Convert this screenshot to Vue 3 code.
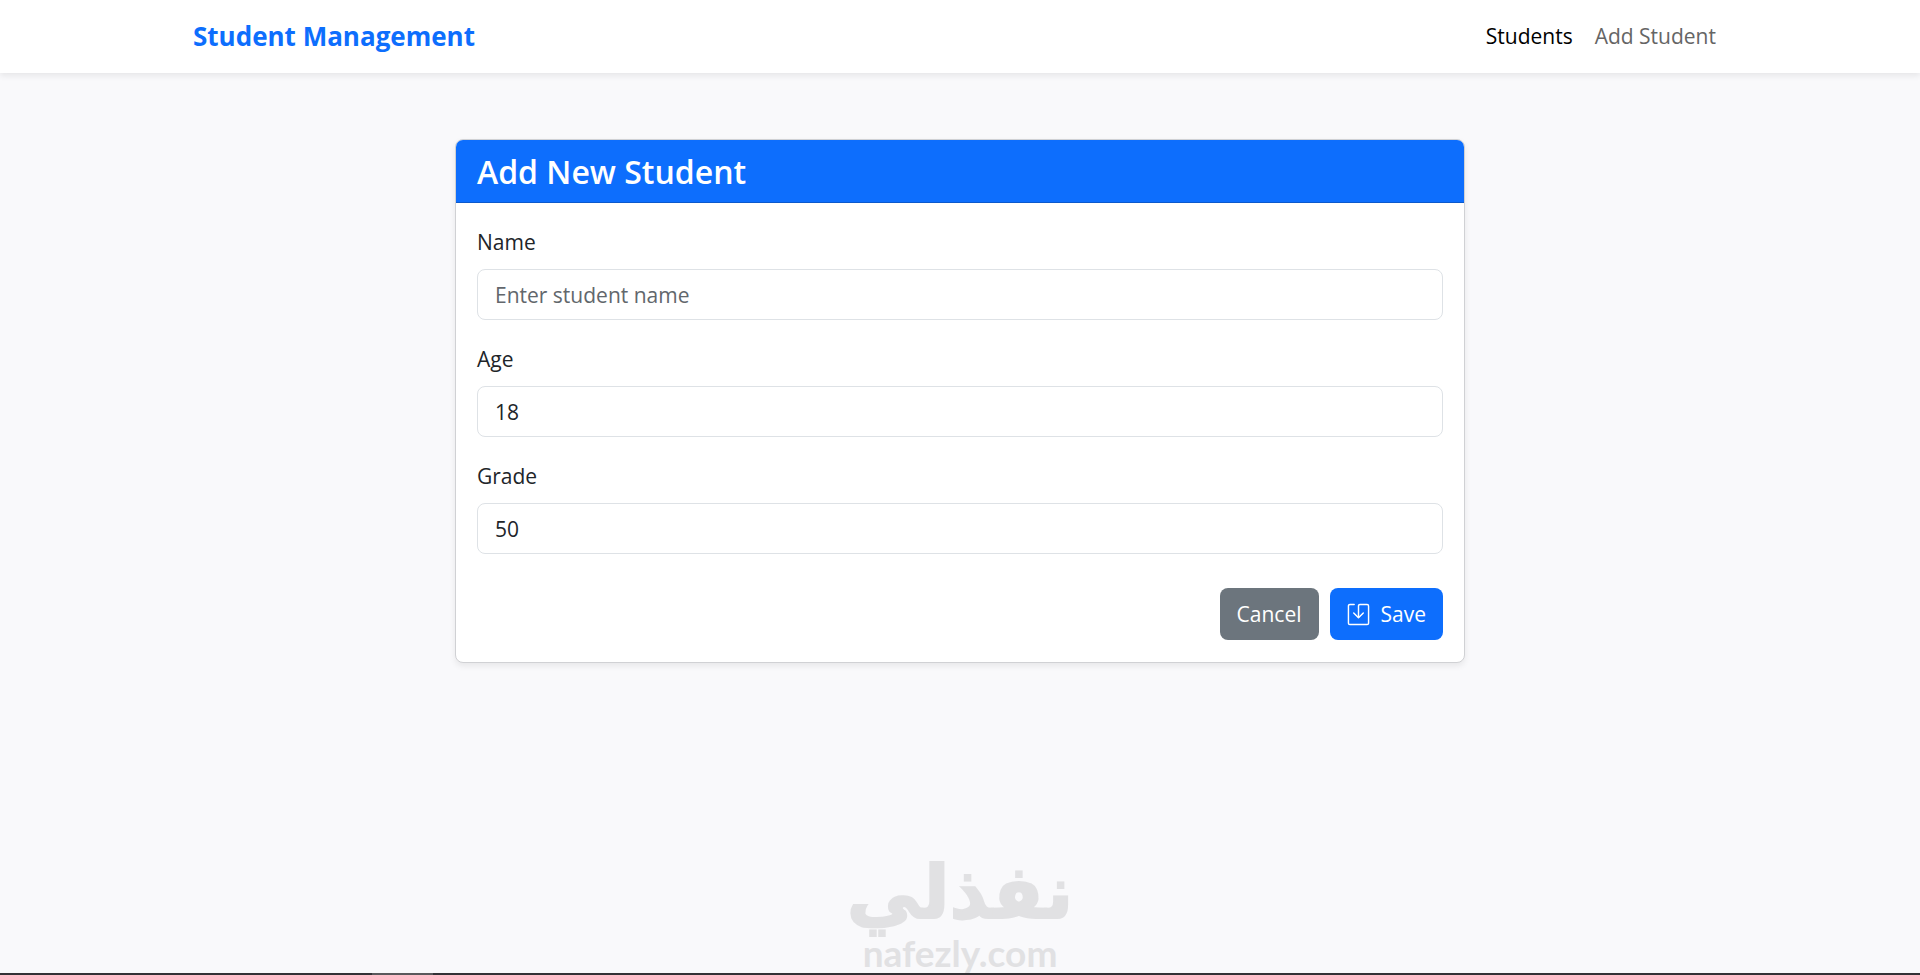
<script setup>
import { ref } from 'vue'

const name = ref('')
const age = ref(18)
const grade = ref(50)
</script>

<template>
  <div class="page">
    <header class="navbar">
      <div class="container">
        <a class="brand" href="#">Student Management</a>
        <nav class="links">
          <a class="link active" href="#students">Students</a>
          <a class="link" href="#add">Add Student</a>
        </nav>
      </div>
    </header>

    <main class="main">
      <section class="card">
        <h1 class="card-title">Add New Student</h1>
        <form class="card-body" @submit.prevent>
          <div class="field">
            <label for="name">Name</label>
            <input id="name" v-model="name" type="text" placeholder="Enter student name" />
          </div>
          <div class="field">
            <label for="age">Age</label>
            <input id="age" v-model="age" type="number" />
          </div>
          <div class="field">
            <label for="grade">Grade</label>
            <input id="grade" v-model="grade" type="number" />
          </div>
          <div class="actions">
            <button class="btn cancel" type="button">Cancel</button>
            <button class="btn save" type="submit">
              <svg class="icon" viewBox="0 0 24 24" aria-hidden="true">
                <path d="M7.500 1.500H3A1.500 1.500 0 0 0 1.500 3v18A1.500 1.500 0 0 0 3 22.500h18a1.500 1.500 0 0 0 1.500-1.500V3A1.500 1.500 0 0 0 21 1.500h-7.500A1.500 1.500 0 0 0 12 3v12" />
                <path d="M7 10.500l5 5 5-5" />
              </svg>
              <span>Save</span>
            </button>
          </div>
        </form>
      </section>
    </main>

    <div class="watermark">
      <span class="mark-ar" lang="ar" dir="rtl">نفذلي</span>
      <span class="mark-en">nafezly.com</span>
    </div>

    <footer class="edge"><span class="edge-thumb"></span></footer>
  </div>
</template>

<style>
body {
  margin: 0;
  background: #f9f9fb;
}
</style>

<style scoped>
.page,
.page * {
  box-sizing: border-box;
}

.page {
  position: relative;
  display: flex;
  flex-direction: column;
  min-height: 100vh;
  overflow: hidden;
  color: #212529;
  font-family: "Segoe UI", "Open Sans", "Noto Sans", sans-serif;
  font-size: 21px;
  line-height: 33px;
}

.navbar {
  padding: 11px 0;
  background: #fff;
  box-shadow: 0 3px 6px rgba(0, 0, 0, 0.075);
}

.container {
  display: flex;
  align-items: center;
  justify-content: space-between;
  max-width: 1556px;
  margin: 0 auto;
  padding: 0 11px;
}

.brand {
  color: #0d6efd;
  font-size: 26px;
  font-weight: 700;
  text-decoration: none;
}

.links {
  display: flex;
}

.link {
  padding: 9px 11px;
  color: #656565;
  text-decoration: none;
}

.link.active {
  color: #000;
}

.main {
  flex: 1;
  padding: 66px 22px 44px;
}

.card {
  max-width: 1010px;
  margin: 0 auto;
  overflow: hidden;
  background: #fff;
  border: 1px solid #d0d1d4;
  border-radius: 8px;
  box-shadow: 0 3px 6px rgba(0, 0, 0, 0.075);
}

.card-title {
  margin: 0;
  padding: 12px 21px 10px;
  color: #fff;
  background: #0d6efd;
  border-bottom: 1px solid #0c59cc;
  font-size: 32px;
  font-weight: 600;
  line-height: 40px;
}

.card-body {
  padding: 22px 21px;
}

.field {
  display: flex;
  flex-direction: column;
  gap: 9px;
  margin-bottom: 22px;
}

.field label {
  line-height: 35px;
}

.field input {
  width: 100%;
  height: 51px;
  padding: 0 17px;
  color: #212529;
  background: #fff;
  border: 1px solid #dee2e6;
  border-radius: 8px;
  font: inherit;
  appearance: textfield;
}

.field input::placeholder {
  color: #62676c;
  opacity: 1;
}

.field input::-webkit-inner-spin-button {
  display: none;
}

.actions {
  display: flex;
  justify-content: flex-end;
  gap: 11px;
  padding-top: 12px;
}

.btn {
  display: flex;
  align-items: center;
  gap: 11px;
  height: 52px;
  padding: 0 17px;
  color: #fff;
  border: 0;
  border-radius: 8px;
  font: inherit;
}

.cancel {
  background: #6c757d;
}

.save {
  background: #0d6efd;
}

.icon {
  width: 23px;
  height: 23px;
  fill: none;
  stroke: #fff;
  stroke-width: 1.5;
  stroke-linecap: round;
  stroke-linejoin: round;
}

.watermark {
  position: absolute;
  bottom: 0;
  left: 50%;
  display: flex;
  flex-direction: column;
  align-items: center;
  color: #e1e1e3;
  font-weight: 700;
  transform: translateX(-50%);
  pointer-events: none;
}

.mark-ar {
  font-family: "DejaVu Sans", sans-serif;
  font-size: 74px;
  line-height: 78px;
  -webkit-text-stroke: 2px #e1e1e3;
}

.mark-en {
  font-family: "Lato", sans-serif;
  font-size: 37px;
  line-height: 44px;
}

.edge {
  height: 2px;
  padding-left: 372px;
  background: #333236;
}

.edge-thumb {
  display: block;
  width: 61px;
  height: 2px;
  background: #5a595c;
}
</style>
